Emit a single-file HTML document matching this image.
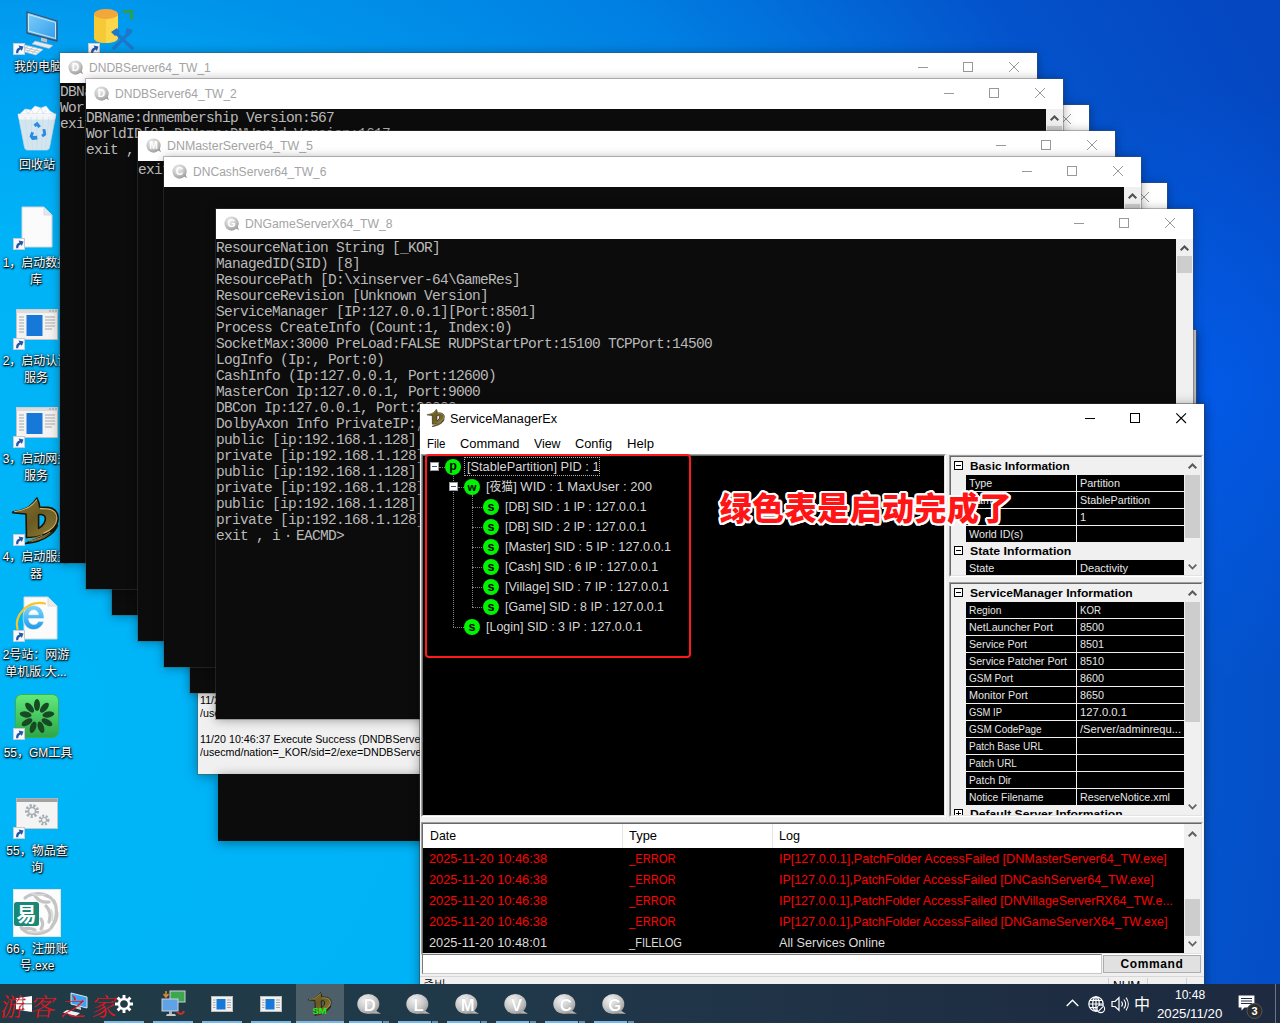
<!DOCTYPE html>
<html lang="zh-CN"><head><meta charset="utf-8"><title>desktop</title>
<style>
html,body{margin:0;padding:0}
body{width:1280px;height:1023px;overflow:hidden;position:relative;font-family:"Liberation Sans","Noto Sans CJK SC",sans-serif;
background:radial-gradient(ellipse 210px 300px at 1215px 385px,rgba(2,92,238,.75) 0,rgba(2,92,238,0) 100%),radial-gradient(circle at 0px 720px,#00b5f8 0,#00b3f7 480px,#00a4f4 640px,#0092ea 760px,#007fe2 950px,#0453cc 1220px,#0447c1 1420px);}
.a{position:absolute}
svg{display:block;overflow:visible}
/* desktop icons */
.lbl{position:absolute;width:90px;text-align:center;color:#fff;font-size:12px;line-height:17px;white-space:nowrap;
 text-shadow:0 1px 2px #000,0 0 3px rgba(0,0,0,.9),1px 1px 1px rgba(0,0,0,.8)}
/* console windows */
.cw{position:absolute;width:977px;height:510px;background:#0c0c0c;box-shadow:0 0 0 1px rgba(80,80,80,.35),0 1px 10px rgba(0,0,0,.36)}
.cw .tb{position:absolute;left:0;top:0;right:0;height:30px;background:#fff}
.cw .tt{position:absolute;left:29px;top:0;line-height:31px;font-size:12px;color:#a4a4a4;white-space:nowrap}
.cw .ic{position:absolute;left:8px;top:7px}
.cw .wb{position:absolute;top:9px;width:10px;height:10px}
.cw .con{position:absolute;left:0;top:30px;right:17px;bottom:0;color:#b9b9b9;font-family:"Liberation Mono",monospace;font-size:14.5px;letter-spacing:-0.7014px;line-height:16px;white-space:pre;overflow:hidden;padding-top:1px}
.cw .sb{position:absolute;right:0;top:30px;width:17px;bottom:0;background:#f0f0f0}
.cw .sb .th{position:absolute;left:1px;top:17px;width:15px;height:17px;background:#cdcdcd}
.fw{display:inline-block;width:16px;text-align:center;letter-spacing:0}
.f{display:inline-block;transform-origin:0 50%;white-space:nowrap}
/* service manager */
#sm{position:absolute;left:420px;top:404px;width:784px;height:600px;background:#f0f0f0;box-shadow:0 0 0 1px rgba(60,60,60,.45),0 1px 11px rgba(0,0,0,.38);font-size:12px;color:#000}
#sm .tb{position:absolute;left:0;top:0;right:0;height:30px;background:#fff}
#sm .mb{position:absolute;left:0;top:30px;right:0;height:20px;background:#fff}
#sm .mb span{position:absolute;top:0;line-height:20px;font-size:12.5px;white-space:nowrap}
.sunk{position:absolute;box-sizing:border-box;border:1px solid;border-color:#a0a0a0 #fff #fff #a0a0a0}
.sunk>.in{position:absolute;left:0;top:0;right:0;bottom:0;box-sizing:border-box;border:1px solid;border-color:#696969 #e3e3e3 #e3e3e3 #696969;overflow:hidden}
.tr{position:absolute;white-space:nowrap;color:#d6d6d6;font-size:13.3px;line-height:20px;height:20px}
.pg{position:absolute;left:0;top:0;right:17px;bottom:0;background:#f0f0f0;overflow:hidden;font-size:11px}
.pg .h{position:absolute;left:19px;font-weight:bold;font-size:11px;line-height:16px;height:16px;white-space:nowrap;color:#000}
.pg .bx{position:absolute;left:3px;width:7px;height:7px;border:1px solid #000;background:#fff}
.pg .bx:before{content:"";position:absolute;left:1px;top:3px;width:5px;height:1px;background:#000}
.pg .bx.p:after{content:"";position:absolute;left:3px;top:1px;width:1px;height:5px;background:#000}
.pg .n,.pg .v{position:absolute;height:16px;line-height:16px;background:#000;color:#e6e6e6;white-space:nowrap;overflow:hidden;font-size:11px;box-sizing:border-box;padding-left:3px}
.pg .n{left:15px;width:110px}
.pg .v{left:126px;right:0}
.vsb{position:absolute;right:0;top:0;bottom:0;width:17px;background:#f0f0f0}
.vsb .th{position:absolute;left:1px;width:15px;background:#cdcdcd}
.lv{position:absolute;white-space:nowrap;font-size:13px;line-height:21px;height:21px}
.red{color:#ff0000}
/* taskbar */
#tk{position:absolute;left:0;top:984px;width:1280px;height:39px;background:linear-gradient(90deg,#203b45 0,#20394a 40%,#203347 60%,#1e2d42 80%,#1d2a40 100%)}
.bar{position:absolute;top:37px;height:2px;width:40px;background:#76b9ed}
.bub{position:absolute;top:8px}
</style></head>
<body>
<svg class="a" style="left:12px;top:10px" width="48" height="46" viewBox="0 0 48 46">
<defs><linearGradient id="mon" x1="0" y1="0" x2="1" y2="1"><stop offset="0" stop-color="#7fd0fb"/><stop offset="1" stop-color="#2f9bea"/></linearGradient></defs>
<polygon points="15,2 45,11 45,31 15,23" fill="url(#mon)" stroke="#3c5068" stroke-width="1.3" stroke-linejoin="round"/>
<polygon points="16.5,4.5 43.5,12.5 43.5,28.5 16.5,21" fill="none" stroke="#d9ecf8" stroke-width=".9"/>
<polygon points="29,27.5 35,29 35,32.5 29,31" fill="#b9c1c9"/>
<polygon points="23,31 41,35.5 37,38.5 20,34" fill="#e6eaee" stroke="#aeb6be" stroke-width=".6"/>
<polygon points="9,34 31,39.5 24,45 2,39" fill="#f4f6f8" stroke="#c0c7ce" stroke-width=".7"/>
<path d="M7.5 36.300l21 5.100M5.5 38l20.5 5M11 35l-6 4.600M16 36.200l-6 4.600M21 37.400l-6 4.700M26 38.600l-6 4.8" stroke="#aab3bb" stroke-width=".7"/>
</svg>
<svg class="a" style="left:13px;top:43px" width="12" height="12" viewBox="0 0 12 12"><rect x=".5" y=".5" width="11" height="11" fill="#f7f8fa" stroke="#c2cbd6"/><path d="M3.2 10.300c-.5-3 .8-5.2 3.3-5.900L5.6 2.600l4.9.9-1.7 4.6-.9-1.700c-1.8.5-2.6 1.8-2.7 3.900z" fill="#2455a8"/></svg>
<div class="lbl" style="left:-7px;top:59px">我的电脑</div>
<svg class="a" style="left:92px;top:8px" width="44" height="44" viewBox="0 0 44 44">
<path d="M2 6v24c0 3 5.5 5 12 5s12-2 12-5V6z" fill="#fbd84a"/>
<path d="M2 6v24c0 3 5.5 5 12 5V6z" fill="#f4c22b" opacity=".6"/>
<ellipse cx="14" cy="6" rx="12" ry="5" fill="#f2a73b"/>
<path d="M31 2h10v10h-3V5h-7z" fill="#2e9f48"/>
<path d="M22 40L38 24" stroke="#1f77c9" stroke-width="3.4" stroke-linecap="round"/>
<path d="M40 40L24 25" stroke="#1f77c9" stroke-width="3.4" stroke-linecap="round"/>
<path d="M35 20l6 2-3 5-5-2z" fill="#1f77c9"/>
<path d="M19 24l6-4 3 4-5 4z" fill="#1f77c9"/>
</svg>
<svg class="a" style="left:88px;top:43px" width="12" height="12" viewBox="0 0 12 12"><rect x=".5" y=".5" width="11" height="11" fill="#f7f8fa" stroke="#c2cbd6"/><path d="M3.2 10.300c-.5-3 .8-5.2 3.3-5.900L5.6 2.600l4.9.9-1.7 4.6-.9-1.700c-1.8.5-2.6 1.8-2.7 3.900z" fill="#2455a8"/></svg>
<svg class="a" style="left:16px;top:105px" width="42" height="46" viewBox="0 0 42 46">
<path d="M4 9l5-5 6 1 4-4 6 2 5-2 4 5 5 3-2 4H6z" fill="#fbfcfd" stroke="#d8dde2" stroke-width=".6"/>
<path d="M9 4l3 5 3-4 4 5 6-7 2 6 3-4" fill="none" stroke="#d5dbe0" stroke-width=".8"/>
<path d="M2 9h38l-6.5 33.500c-.3 1.5-1.4 2.5-3 2.500H11.500c-1.6 0-2.7-1-3-2.500z" fill="#e4ebf1" fill-opacity=".92" stroke="#cfd8e0" stroke-width=".7"/>
<path d="M2 9h38l-1 5.500H3z" fill="#f3f6f9"/>
<path d="M9 12l3.5 31M33 12l-3.5 31M21 12v32M15 12l1.5 32M27 12l-1.5 32" stroke="#ccd6de" stroke-width=".6" fill="none"/>
<g fill="#2b8be0"><path d="M17.5 19.500l3.8-2.8 3.6 4.6-2.6 1.6-1.5-2-1.4 1z"/><path d="M26.5 24l3 .3.7 5.6-3.2 2.4-1.8-2.4 2-1.500z"/><path d="M21.5 34.500l-5.5.4-2.5-3.3 1.8-4.9 2.7 1.1-1.2 3.2 4.3-.3z"/></g>
</svg>
<div class="lbl" style="left:-8px;top:157px">回收站</div>
<svg class="a" style="left:21px;top:206px" width="32" height="42" viewBox="0 0 32 42">
<path d="M1 1h22l8 8v32H1z" fill="#fbfbfb" stroke="#d2d6da" stroke-width="1"/>
<path d="M23 1v8h8z" fill="#e4e7ea" stroke="#d2d6da" stroke-width=".8"/></svg>
<svg class="a" style="left:13px;top:238px" width="12" height="12" viewBox="0 0 12 12"><rect x=".5" y=".5" width="11" height="11" fill="#f7f8fa" stroke="#c2cbd6"/><path d="M3.2 10.300c-.5-3 .8-5.2 3.3-5.900L5.6 2.600l4.9.9-1.7 4.6-.9-1.700c-1.8.5-2.6 1.8-2.7 3.900z" fill="#2455a8"/></svg>
<div class="lbl" style="left:-9px;top:255px">1，启动数据<br>库</div>
<svg class="a" style="left:16px;top:309px" width="42" height="31" viewBox="0 0 42 31">
<rect x=".5" y=".5" width="41" height="30" fill="#f3f3f3" stroke="#c3c3c3"/>
<rect x=".5" y=".5" width="41" height="3.5" fill="#dcdcdc"/>
<rect x="10.5" y="6" width="16" height="21" fill="#1678d8"/>
<g stroke="#a9a9a9" stroke-width="1"><path d="M3 8h5M3 11h5M3 14h5M3 17h5M3 20h5M3 23h5"/><path d="M29 8h10M29 11h10M29 14h10M29 17h10M29 20h7"/></g>
<g fill="#9a9a9a"><rect x="33" y="1.5" width="2" height="1"/><rect x="36" y="1.5" width="2" height="1"/><rect x="39" y="1.5" width="2" height="1"/></g>
</svg>
<svg class="a" style="left:13px;top:338px" width="12" height="12" viewBox="0 0 12 12"><rect x=".5" y=".5" width="11" height="11" fill="#f7f8fa" stroke="#c2cbd6"/><path d="M3.2 10.300c-.5-3 .8-5.2 3.3-5.900L5.6 2.600l4.9.9-1.7 4.6-.9-1.700c-1.8.5-2.6 1.8-2.7 3.900z" fill="#2455a8"/></svg>
<div class="lbl" style="left:-9px;top:353px">2，启动认证<br>服务</div>
<svg class="a" style="left:16px;top:407px" width="42" height="31" viewBox="0 0 42 31">
<rect x=".5" y=".5" width="41" height="30" fill="#f3f3f3" stroke="#c3c3c3"/>
<rect x=".5" y=".5" width="41" height="3.5" fill="#dcdcdc"/>
<rect x="10.5" y="6" width="16" height="21" fill="#1678d8"/>
<g stroke="#a9a9a9" stroke-width="1"><path d="M3 8h5M3 11h5M3 14h5M3 17h5M3 20h5M3 23h5"/><path d="M29 8h10M29 11h10M29 14h10M29 17h10M29 20h7"/></g>
<g fill="#9a9a9a"><rect x="33" y="1.5" width="2" height="1"/><rect x="36" y="1.5" width="2" height="1"/><rect x="39" y="1.5" width="2" height="1"/></g>
</svg>
<svg class="a" style="left:13px;top:436px" width="12" height="12" viewBox="0 0 12 12"><rect x=".5" y=".5" width="11" height="11" fill="#f7f8fa" stroke="#c2cbd6"/><path d="M3.2 10.300c-.5-3 .8-5.2 3.3-5.900L5.6 2.600l4.9.9-1.7 4.6-.9-1.700c-1.8.5-2.6 1.8-2.7 3.900z" fill="#2455a8"/></svg>
<div class="lbl" style="left:-9px;top:451px">3，启动网关<br>服务</div>
<svg class="a" style="left:12px;top:497px" width="48" height="48" viewBox="0 0 48 48">
<defs><linearGradient id="gd12_497" x1="0" y1="0" x2="1" y2="1"><stop offset="0" stop-color="#8a7630"/><stop offset=".5" stop-color="#6a5a22"/><stop offset="1" stop-color="#94803a"/></linearGradient></defs>
<path d="M13.4 46.600C22 46 31.5 43 38 38c4-3 6.5-6.5 7.5-10-3 5-9 9.5-16 12.2-6 2.1-12 3.6-16.1 6.400z" fill="#7c6a2a" stroke="#1a1405" stroke-width="1.4" stroke-linejoin="round"/>
<path fill-rule="evenodd" d="M25 1c1.5 3 2.6 6 2.6 9l8.4.4c6.5.6 10.5 5.1 10.2 11.2-.4 7.4-7.2 13.9-16.2 16.9-6 2-11 2.5-15.5 2l-.5-23.500L.7 15.800V15c6.3-1 12.3-2.5 16.1-5.100C20 7.5 23 4.5 25 1zM26.6 17.700c3.4-.7 6.8.3 6.8 3.8 0 4-2.9 7.5-6.8 9.900z" fill="url(#gd12_497)" stroke="#1a1405" stroke-width="1.6" stroke-linejoin="round"/>
<path d="M2.5 14.800c6-1 11.5-2.6 15-5 3-2.2 5.5-4.5 7.2-7M28.5 11.600l7.5.4c5.5.5 9 4.3 8.8 9.5-.3 6-5.5 11.5-13 14.5" fill="none" stroke="#d8c47a" stroke-width="1.1" stroke-linecap="round" opacity=".9"/>
<path d="M15.5 41.800c5-.2 10.5-1.6 15-3.600M17 44.200c7-1.3 15-4.2 21-9" fill="none" stroke="#c9b566" stroke-width=".9" opacity=".8"/>
</svg>
<svg class="a" style="left:13px;top:534px" width="12" height="12" viewBox="0 0 12 12"><rect x=".5" y=".5" width="11" height="11" fill="#f7f8fa" stroke="#c2cbd6"/><path d="M3.2 10.300c-.5-3 .8-5.2 3.3-5.900L5.6 2.600l4.9.9-1.7 4.6-.9-1.700c-1.8.5-2.6 1.8-2.7 3.900z" fill="#2455a8"/></svg>
<div class="lbl" style="left:-9px;top:549px">4，启动服务<br>器</div>
<svg class="a" style="left:15px;top:596px" width="44" height="45" viewBox="0 0 44 45">
<defs><linearGradient id="ieg" x1="0" y1="0" x2="0" y2="1"><stop offset="0" stop-color="#7fd4fb"/><stop offset="1" stop-color="#1f9be6"/></linearGradient></defs>
<path d="M9 1h24l9 9v33H9z" fill="#fbfbfb" stroke="#d4d7da"/>
<path d="M33 1v9h9z" fill="#e8eaec" stroke="#d4d7da" stroke-width=".8"/>
<path d="M28.8 25.500c-1.3 4.7-5.3 8-10.3 8C12.7 33.5 8 28.8 8 21.500S12.7 9.5 18.5 9.500c6.2 0 10.8 5.3 10.5 13H13.500c.3 3.7 2.3 6 5.3 6 2.2 0 3.8-1.1 4.6-3zM13.7 18.700h9.800c-.4-3-2.2-4.8-4.8-4.8-2.7 0-4.5 1.8-5 4.800z" fill="url(#ieg)" stroke="#e9f6fd" stroke-width=".5"/>
<path d="M2.5 33C-1 20 12 4 30 7.5" fill="none" stroke="#f6c62c" stroke-width="2.2" stroke-linecap="round"/>
</svg>
<svg class="a" style="left:13px;top:630px" width="12" height="12" viewBox="0 0 12 12"><rect x=".5" y=".5" width="11" height="11" fill="#f7f8fa" stroke="#c2cbd6"/><path d="M3.2 10.300c-.5-3 .8-5.2 3.3-5.900L5.6 2.600l4.9.9-1.7 4.6-.9-1.700c-1.8.5-2.6 1.8-2.7 3.900z" fill="#2455a8"/></svg>
<div class="lbl" style="left:-9px;top:647px">2号站：网游<br>单机版.大...</div>
<svg class="a" style="left:15px;top:694px" width="44" height="44" viewBox="0 0 44 44">
<defs><linearGradient id="grn" x1="0" y1="0" x2="0" y2="1"><stop offset="0" stop-color="#62ea7c"/><stop offset="1" stop-color="#2ea548"/></linearGradient></defs>
<rect x=".5" y=".5" width="43" height="43" rx="6" fill="url(#grn)" stroke="#35b150"/>
<g fill="#174a22" transform="translate(22 22.5)"><ellipse rx="3" ry="6" cy="-11.5" transform="rotate(0)"/><ellipse rx="3" ry="6" cy="-11.5" transform="rotate(40)"/><ellipse rx="3" ry="6" cy="-11.5" transform="rotate(80)"/><ellipse rx="3" ry="6" cy="-11.5" transform="rotate(120)"/><ellipse rx="3" ry="6" cy="-11.5" transform="rotate(160)"/><ellipse rx="3" ry="6" cy="-11.5" transform="rotate(200)"/><ellipse rx="3" ry="6" cy="-11.5" transform="rotate(240)"/><ellipse rx="3" ry="6" cy="-11.5" transform="rotate(280)"/><ellipse rx="3" ry="6" cy="-11.5" transform="rotate(320)"/></g></svg>
<svg class="a" style="left:13px;top:728px" width="12" height="12" viewBox="0 0 12 12"><rect x=".5" y=".5" width="11" height="11" fill="#f7f8fa" stroke="#c2cbd6"/><path d="M3.2 10.300c-.5-3 .8-5.2 3.3-5.900L5.6 2.600l4.9.9-1.7 4.6-.9-1.700c-1.8.5-2.6 1.8-2.7 3.900z" fill="#2455a8"/></svg>
<div class="lbl" style="left:-7px;top:745px">55，GM工具</div>
<svg class="a" style="left:16px;top:798px" width="42" height="31" viewBox="0 0 42 31">
<rect x=".5" y=".5" width="41" height="30" fill="#f4f4f4" stroke="#c6c6c6"/>
<rect x=".5" y=".5" width="41" height="3.5" fill="#a2a2a2"/>
<g fill="none" stroke="#a8aeb4"><circle cx="16" cy="13" r="5.5" stroke-width="3" stroke-dasharray="2.2 1.6"/><circle cx="16" cy="13" r="3.5" stroke-width="1.5"/><circle cx="28" cy="22" r="4.2" stroke-width="2.6" stroke-dasharray="2 1.5"/><circle cx="28" cy="22" r="2.5" stroke-width="1.2"/></g>
</svg>
<svg class="a" style="left:13px;top:827px" width="12" height="12" viewBox="0 0 12 12"><rect x=".5" y=".5" width="11" height="11" fill="#f7f8fa" stroke="#c2cbd6"/><path d="M3.2 10.300c-.5-3 .8-5.2 3.3-5.900L5.6 2.600l4.9.9-1.7 4.6-.9-1.700c-1.8.5-2.6 1.8-2.7 3.900z" fill="#2455a8"/></svg>
<div class="lbl" style="left:-8px;top:843px">55，物品查<br>询</div>
<svg class="a" style="left:13px;top:889px" width="48" height="48" viewBox="0 0 48 48">
<rect x=".5" y=".5" width="47" height="47" fill="#fdfdfd" stroke="#e3e3e3"/>
<g fill="none" stroke="#c4c4c4" stroke-width="3.2" stroke-linecap="round"><path d="M12 9c6-5 16-6 24-1M30 5c5 1 10 5 12 10M41 12c4 8 3 19-3 27M44 24c0 5-2 10-5 13M36 41c-8 5-19 5-27-1M16 44c-3-1-6-3-8-6M22 7c3 4 8 7 14 6M33 17c4 4 5 10 3 16M28 30c2 3 2 7 0 10M10 40c4-1 8-1 12 1"/></g>
<g fill="none" stroke="#dadada" stroke-width="1.6"><path d="M18 4c5 3 9 3 14 1M38 20c2 4 2 8 1 12M14 42c6 2 12 2 18-1"/></g>
<rect x="1" y="13" width="25" height="24" rx="2.5" fill="#1a8878"/>
<text x="13.5" y="32.5" font-size="20" font-weight="bold" fill="#fff" text-anchor="middle" font-family="'Liberation Sans','Noto Sans CJK SC',sans-serif">易</text>
</svg>
<div class="lbl" style="left:-8px;top:941px">66，注册账<br>号.exe</div>
<div class="a" style="left:198px;top:330px;width:998px;height:444px;background:#f0f0f0;border-right:3px solid #cfcfcf;box-sizing:border-box;box-shadow:0 0 0 1px rgba(90,90,90,.5),0 2px 12px rgba(0,0,0,.4);font-size:11px;line-height:13px;color:#000;white-space:pre">
<div class="a" style="left:2px;top:364px;font-size:11.5px;transform:scaleX(0.93);transform-origin:0 0">11/20 10:46:37 Execute Success (DNDBServer64_TW.exe)
/usecmd/nation=_KOR/sid=1/exe=DNDBServer64_TW.exe

11/20 10:46:37 Execute Success (DNDBServer64_TW.exe)
/usecmd/nation=_KOR/sid=2/exe=DNDBServer64_TW.exe</div></div>
<div class="a" style="left:218px;top:774px;width:700px;height:67px;background:#0c0c0c;box-shadow:0 2px 10px rgba(0,0,0,.4)"></div>
<div class="cw" style="left:112px;top:105px"><div class="tb"><svg class="ic" width="16" height="16" viewBox="0 0 18 18"><defs><radialGradient id="bgc2" cx=".4" cy=".3" r=".8"><stop offset="0" stop-color="#f0f0f0"/><stop offset=".55" stop-color="#c4c4c4"/><stop offset="1" stop-color="#909090"/></radialGradient></defs><path d="M12 13l5 3-2-5z" fill="#9a9a9a"/><circle cx="8.5" cy="8.5" r="8" fill="url(#bgc2)"/><text x="8.5" y="12.6" font-size="11.5" font-weight="bold" fill="#fff" text-anchor="middle" font-family="'Liberation Sans',sans-serif">L</text></svg><div class="tt"></div><svg class="wb" style="left:858px" viewBox="0 0 10 10"><path d="M0 5.500h10" stroke="#999" stroke-width="1"/></svg><svg class="wb" style="left:903px" viewBox="0 0 10 10"><rect x=".5" y=".5" width="9" height="9" fill="none" stroke="#999" stroke-width="1"/></svg><svg class="wb" style="left:949px" viewBox="0 0 10 10"><path d="M0 0l10 10M10 0L0 10" stroke="#999" stroke-width="1"/></svg></div><div class="con"></div><div class="sb"><svg class="a" style="left:4px;top:6px" width="9" height="6" viewBox="0 0 9 6"><path d="M.7 5.300L4.5 1.500l3.8 3.8" fill="none" stroke="#505050" stroke-width="2"/></svg><div class="th"></div></div></div>
<div class="cw" style="left:60px;top:53px"><div class="tb"><svg class="ic" width="16" height="16" viewBox="0 0 18 18"><defs><radialGradient id="bgc0" cx=".4" cy=".3" r=".8"><stop offset="0" stop-color="#f0f0f0"/><stop offset=".55" stop-color="#c4c4c4"/><stop offset="1" stop-color="#909090"/></radialGradient></defs><path d="M12 13l5 3-2-5z" fill="#9a9a9a"/><circle cx="8.5" cy="8.5" r="8" fill="url(#bgc0)"/><text x="8.5" y="12.6" font-size="11.5" font-weight="bold" fill="#fff" text-anchor="middle" font-family="'Liberation Sans',sans-serif">D</text></svg><div class="tt"><span class="f" id="f1" style="transform:scaleX(1.0035)">DNDBServer64_TW_1</span></div><svg class="wb" style="left:858px" viewBox="0 0 10 10"><path d="M0 5.500h10" stroke="#999" stroke-width="1"/></svg><svg class="wb" style="left:903px" viewBox="0 0 10 10"><rect x=".5" y=".5" width="9" height="9" fill="none" stroke="#999" stroke-width="1"/></svg><svg class="wb" style="left:949px" viewBox="0 0 10 10"><path d="M0 0l10 10M10 0L0 10" stroke="#999" stroke-width="1"/></svg></div><div class="con">DBName:dnmembership Version:567
WorldID[0] DBName:DNWorld Version:1617
exit , i<span class="fw">·</span>EACMD&gt;</div><div class="sb"><svg class="a" style="left:4px;top:6px" width="9" height="6" viewBox="0 0 9 6"><path d="M.7 5.300L4.5 1.500l3.8 3.8" fill="none" stroke="#505050" stroke-width="2"/></svg><div class="th"></div></div></div>
<div class="cw" style="left:86px;top:79px"><div class="tb"><svg class="ic" width="16" height="16" viewBox="0 0 18 18"><defs><radialGradient id="bgc1" cx=".4" cy=".3" r=".8"><stop offset="0" stop-color="#f0f0f0"/><stop offset=".55" stop-color="#c4c4c4"/><stop offset="1" stop-color="#909090"/></radialGradient></defs><path d="M12 13l5 3-2-5z" fill="#9a9a9a"/><circle cx="8.5" cy="8.5" r="8" fill="url(#bgc1)"/><text x="8.5" y="12.6" font-size="11.5" font-weight="bold" fill="#fff" text-anchor="middle" font-family="'Liberation Sans',sans-serif">D</text></svg><div class="tt"><span class="f" id="f2" style="transform:scaleX(1.0035)">DNDBServer64_TW_2</span></div><svg class="wb" style="left:858px" viewBox="0 0 10 10"><path d="M0 5.500h10" stroke="#999" stroke-width="1"/></svg><svg class="wb" style="left:903px" viewBox="0 0 10 10"><rect x=".5" y=".5" width="9" height="9" fill="none" stroke="#999" stroke-width="1"/></svg><svg class="wb" style="left:949px" viewBox="0 0 10 10"><path d="M0 0l10 10M10 0L0 10" stroke="#999" stroke-width="1"/></svg></div><div class="con">DBName:dnmembership Version:567
WorldID[0] DBName:DNWorld Version:1617
exit , i<span class="fw">·</span>EACMD&gt;</div><div class="sb"><svg class="a" style="left:4px;top:6px" width="9" height="6" viewBox="0 0 9 6"><path d="M.7 5.300L4.5 1.500l3.8 3.8" fill="none" stroke="#505050" stroke-width="2"/></svg><div class="th"></div></div></div>
<div class="cw" style="left:190px;top:183px"><div class="tb"><svg class="ic" width="16" height="16" viewBox="0 0 18 18"><defs><radialGradient id="bgc5" cx=".4" cy=".3" r=".8"><stop offset="0" stop-color="#f0f0f0"/><stop offset=".55" stop-color="#c4c4c4"/><stop offset="1" stop-color="#909090"/></radialGradient></defs><path d="M12 13l5 3-2-5z" fill="#9a9a9a"/><circle cx="8.5" cy="8.5" r="8" fill="url(#bgc5)"/><text x="8.5" y="12.6" font-size="11.5" font-weight="bold" fill="#fff" text-anchor="middle" font-family="'Liberation Sans',sans-serif">V</text></svg><div class="tt"></div><svg class="wb" style="left:858px" viewBox="0 0 10 10"><path d="M0 5.500h10" stroke="#999" stroke-width="1"/></svg><svg class="wb" style="left:903px" viewBox="0 0 10 10"><rect x=".5" y=".5" width="9" height="9" fill="none" stroke="#999" stroke-width="1"/></svg><svg class="wb" style="left:949px" viewBox="0 0 10 10"><path d="M0 0l10 10M10 0L0 10" stroke="#999" stroke-width="1"/></svg></div><div class="con"></div><div class="sb"><svg class="a" style="left:4px;top:6px" width="9" height="6" viewBox="0 0 9 6"><path d="M.7 5.300L4.5 1.500l3.8 3.8" fill="none" stroke="#505050" stroke-width="2"/></svg><div class="th"></div></div></div>
<div class="cw" style="left:138px;top:131px"><div class="tb"><svg class="ic" width="16" height="16" viewBox="0 0 18 18"><defs><radialGradient id="bgc3" cx=".4" cy=".3" r=".8"><stop offset="0" stop-color="#f0f0f0"/><stop offset=".55" stop-color="#c4c4c4"/><stop offset="1" stop-color="#909090"/></radialGradient></defs><path d="M12 13l5 3-2-5z" fill="#9a9a9a"/><circle cx="8.5" cy="8.5" r="8" fill="url(#bgc3)"/><text x="8.5" y="12.6" font-size="11.5" font-weight="bold" fill="#fff" text-anchor="middle" font-family="'Liberation Sans',sans-serif">M</text></svg><div class="tt"><span class="f" id="f3" style="transform:scaleX(1.0327)">DNMasterServer64_TW_5</span></div><svg class="wb" style="left:858px" viewBox="0 0 10 10"><path d="M0 5.500h10" stroke="#999" stroke-width="1"/></svg><svg class="wb" style="left:903px" viewBox="0 0 10 10"><rect x=".5" y=".5" width="9" height="9" fill="none" stroke="#999" stroke-width="1"/></svg><svg class="wb" style="left:949px" viewBox="0 0 10 10"><path d="M0 0l10 10M10 0L0 10" stroke="#999" stroke-width="1"/></svg></div><div class="con">exit , i<span class="fw">·</span>EACMD&gt;</div><div class="sb"><svg class="a" style="left:4px;top:6px" width="9" height="6" viewBox="0 0 9 6"><path d="M.7 5.300L4.5 1.500l3.8 3.8" fill="none" stroke="#505050" stroke-width="2"/></svg><div class="th"></div></div></div>
<div class="cw" style="left:164px;top:157px"><div class="tb"><svg class="ic" width="16" height="16" viewBox="0 0 18 18"><defs><radialGradient id="bgc4" cx=".4" cy=".3" r=".8"><stop offset="0" stop-color="#f0f0f0"/><stop offset=".55" stop-color="#c4c4c4"/><stop offset="1" stop-color="#909090"/></radialGradient></defs><path d="M12 13l5 3-2-5z" fill="#9a9a9a"/><circle cx="8.5" cy="8.5" r="8" fill="url(#bgc4)"/><text x="8.5" y="12.6" font-size="11.5" font-weight="bold" fill="#fff" text-anchor="middle" font-family="'Liberation Sans',sans-serif">C</text></svg><div class="tt"><span class="f" id="f4" style="transform:scaleX(1.0059)">DNCashServer64_TW_6</span></div><svg class="wb" style="left:858px" viewBox="0 0 10 10"><path d="M0 5.500h10" stroke="#999" stroke-width="1"/></svg><svg class="wb" style="left:903px" viewBox="0 0 10 10"><rect x=".5" y=".5" width="9" height="9" fill="none" stroke="#999" stroke-width="1"/></svg><svg class="wb" style="left:949px" viewBox="0 0 10 10"><path d="M0 0l10 10M10 0L0 10" stroke="#999" stroke-width="1"/></svg></div><div class="con"></div><div class="sb"><svg class="a" style="left:4px;top:6px" width="9" height="6" viewBox="0 0 9 6"><path d="M.7 5.300L4.5 1.500l3.8 3.8" fill="none" stroke="#505050" stroke-width="2"/></svg><div class="th"></div></div></div>
<div class="cw" style="left:216px;top:209px"><div class="tb"><svg class="ic" width="16" height="16" viewBox="0 0 18 18"><defs><radialGradient id="bgc6" cx=".4" cy=".3" r=".8"><stop offset="0" stop-color="#f0f0f0"/><stop offset=".55" stop-color="#c4c4c4"/><stop offset="1" stop-color="#909090"/></radialGradient></defs><path d="M12 13l5 3-2-5z" fill="#9a9a9a"/><circle cx="8.5" cy="8.5" r="8" fill="url(#bgc6)"/><text x="8.5" y="12.6" font-size="11.5" font-weight="bold" fill="#fff" text-anchor="middle" font-family="'Liberation Sans',sans-serif">G</text></svg><div class="tt"><span class="f" id="f5" style="transform:scaleX(1.0145)">DNGameServerX64_TW_8</span></div><svg class="wb" style="left:858px" viewBox="0 0 10 10"><path d="M0 5.500h10" stroke="#999" stroke-width="1"/></svg><svg class="wb" style="left:903px" viewBox="0 0 10 10"><rect x=".5" y=".5" width="9" height="9" fill="none" stroke="#999" stroke-width="1"/></svg><svg class="wb" style="left:949px" viewBox="0 0 10 10"><path d="M0 0l10 10M10 0L0 10" stroke="#999" stroke-width="1"/></svg></div><div class="con">ResourceNation String [_KOR]
ManagedID(SID) [8]
ResourcePath [D:\xinserver-64\GameRes]
ResourceRevision [Unknown Version]
ServiceManager [IP:127.0.0.1][Port:8501]
Process CreateInfo (Count:1, Index:0)
SocketMax:3000 PreLoad:FALSE RUDPStartPort:15100 TCPPort:14500
LogInfo (Ip:, Port:0)
CashInfo (Ip:127.0.0.1, Port:12600)
MasterCon Ip:127.0.0.1, Port:9000
DBCon Ip:127.0.0.1, Port:26000
DolbyAxon Info PrivateIP:,
public [ip:192.168.1.128]
private [ip:192.168.1.128]
public [ip:192.168.1.128]
private [ip:192.168.1.128]
public [ip:192.168.1.128]
private [ip:192.168.1.128]
exit , i<span class="fw">·</span>EACMD&gt;</div><div class="sb"><svg class="a" style="left:4px;top:6px" width="9" height="6" viewBox="0 0 9 6"><path d="M.7 5.300L4.5 1.500l3.8 3.8" fill="none" stroke="#505050" stroke-width="2"/></svg><div class="th"></div></div></div>
<div id="sm"><div class="tb"><svg class="a" style="left:7px;top:5px" width="18" height="18" viewBox="0 0 48 48">
<defs><linearGradient id="gd7_5" x1="0" y1="0" x2="1" y2="1"><stop offset="0" stop-color="#8a7630"/><stop offset=".5" stop-color="#6a5a22"/><stop offset="1" stop-color="#94803a"/></linearGradient></defs>
<path d="M13.4 46.600C22 46 31.5 43 38 38c4-3 6.5-6.5 7.5-10-3 5-9 9.5-16 12.2-6 2.1-12 3.6-16.1 6.400z" fill="#7c6a2a" stroke="#1a1405" stroke-width="1.4" stroke-linejoin="round"/>
<path fill-rule="evenodd" d="M25 1c1.5 3 2.6 6 2.6 9l8.4.4c6.5.6 10.5 5.1 10.2 11.2-.4 7.4-7.2 13.9-16.2 16.9-6 2-11 2.5-15.5 2l-.5-23.500L.7 15.800V15c6.3-1 12.3-2.5 16.1-5.100C20 7.5 23 4.5 25 1zM26.6 17.700c3.4-.7 6.8.3 6.8 3.8 0 4-2.9 7.5-6.8 9.900z" fill="url(#gd7_5)" stroke="#1a1405" stroke-width="1.6" stroke-linejoin="round"/>
<path d="M2.5 14.800c6-1 11.5-2.6 15-5 3-2.2 5.5-4.5 7.2-7M28.5 11.600l7.5.4c5.5.5 9 4.3 8.8 9.5-.3 6-5.5 11.5-13 14.5" fill="none" stroke="#d8c47a" stroke-width="1.1" stroke-linecap="round" opacity=".9"/>
<path d="M15.5 41.800c5-.2 10.5-1.6 15-3.600M17 44.200c7-1.3 15-4.2 21-9" fill="none" stroke="#c9b566" stroke-width=".9" opacity=".8"/>
</svg><div class="a" style="left:30px;top:0;line-height:30px;font-size:12.5px;white-space:nowrap"><span class="f" id="f6" style="transform:scaleX(1.0132)">ServiceManagerEx</span></div><svg class="a" style="left:665px;top:9px" width="12" height="12" viewBox="0 0 12 12"><path d="M0 5.500h10" stroke="#000" stroke-width="1" shape-rendering="crispEdges"/></svg><svg class="a" style="left:710px;top:9px" width="12" height="12" viewBox="0 0 12 12"><rect x=".5" y=".5" width="9" height="9" fill="none" stroke="#000" stroke-width="1" shape-rendering="crispEdges"/></svg><svg class="a" style="left:756px;top:9px" width="12" height="12" viewBox="0 0 12 12"><path d="M.3.3l9.7 9.700M10 .3L.3 10" stroke="#000" stroke-width="1.1"/></svg></div><div class="mb"><span style="left:7px"><span class="f" id="f7" style="transform:scaleX(0.9178)">File</span></span><span style="left:40px"><span class="f" id="f8" style="transform:scaleX(1.0317)">Command</span></span><span style="left:114px"><span class="f" id="f9" style="transform:scaleX(0.9860)">View</span></span><span style="left:155px"><span class="f" id="f10" style="transform:scaleX(1.0238)">Config</span></span><span style="left:207px"><span class="f" id="f11" style="transform:scaleX(1.0498)">Help</span></span></div><div class="sunk" style="left:1px;top:50px;width:525px;height:363px"><div class="in" style="background:#000"><div class="a" style="left:16px;top:11px;width:6px;border-top:1px dotted #808080"></div><div class="a" style="left:30px;top:20px;height:151px;border-left:1px dotted #808080"></div><div class="a" style="left:30px;top:171px;width:11px;border-top:1px dotted #808080"></div><div class="a" style="left:35px;top:31px;width:6px;border-top:1px dotted #808080"></div><div class="a" style="left:49px;top:39px;height:112px;border-left:1px dotted #808080"></div><div class="a" style="left:49px;top:51px;width:10px;border-top:1px dotted #808080"></div><div class="a" style="left:49px;top:71px;width:10px;border-top:1px dotted #808080"></div><div class="a" style="left:49px;top:91px;width:10px;border-top:1px dotted #808080"></div><div class="a" style="left:49px;top:111px;width:10px;border-top:1px dotted #808080"></div><div class="a" style="left:49px;top:131px;width:10px;border-top:1px dotted #808080"></div><div class="a" style="left:49px;top:151px;width:10px;border-top:1px dotted #808080"></div><svg class="a" style="left:7px;top:6px" width="9" height="9" viewBox="0 0 9 9"><rect x=".5" y=".5" width="8" height="8" fill="#fff" stroke="#9a9a9a"/><path d="M2 4.500h5" stroke="#3a4fa0" stroke-width="1"/></svg><svg class="a" style="left:22px;top:3px" width="16" height="16" viewBox="0 0 16 16"><circle cx="8" cy="8" r="8" fill="#00f400"/><text x="8" y="11.2" font-size="12.5" font-weight="bold" text-anchor="middle" fill="#000" font-family="'Liberation Sans',sans-serif">p</text></svg><div class="a" style="left:41px;top:1px;width:136px;height:19px;border:1px dotted #b0b0b0;box-sizing:border-box"></div><div class="tr" style="left:44px;top:1px"><span class="f" id="f12" style="transform:scaleX(0.9586)">[StablePartition] PID : 1</span></div><svg class="a" style="left:26px;top:26px" width="9" height="9" viewBox="0 0 9 9"><rect x=".5" y=".5" width="8" height="8" fill="#fff" stroke="#9a9a9a"/><path d="M2 4.500h5" stroke="#3a4fa0" stroke-width="1"/></svg><svg class="a" style="left:41px;top:23px" width="16" height="16" viewBox="0 0 16 16"><circle cx="8" cy="8" r="8" fill="#00f400"/><text x="8" y="12" font-size="11.5" font-weight="bold" text-anchor="middle" fill="#000" font-family="'Liberation Sans',sans-serif">w</text></svg><div class="tr" style="left:63px;top:21px"><span class="f" id="f13" style="transform:scaleX(0.9788)">[<span style="font-size:12px">夜猫</span>] WID : 1 MaxUser : 200</span></div><svg class="a" style="left:60px;top:43px" width="16" height="16" viewBox="0 0 16 16"><circle cx="8" cy="8" r="8" fill="#00f400"/><text x="8" y="12" font-size="12.5" font-weight="bold" text-anchor="middle" fill="#000" font-family="'Liberation Sans',sans-serif">s</text></svg><div class="tr" style="left:82px;top:41px"><span class="f" id="f14" style="transform:scaleX(0.9263)">[DB] SID : 1 IP : 127.0.0.1</span></div><svg class="a" style="left:60px;top:63px" width="16" height="16" viewBox="0 0 16 16"><circle cx="8" cy="8" r="8" fill="#00f400"/><text x="8" y="12" font-size="12.5" font-weight="bold" text-anchor="middle" fill="#000" font-family="'Liberation Sans',sans-serif">s</text></svg><div class="tr" style="left:82px;top:61px"><span class="f" id="f15" style="transform:scaleX(0.9263)">[DB] SID : 2 IP : 127.0.0.1</span></div><svg class="a" style="left:60px;top:83px" width="16" height="16" viewBox="0 0 16 16"><circle cx="8" cy="8" r="8" fill="#00f400"/><text x="8" y="12" font-size="12.5" font-weight="bold" text-anchor="middle" fill="#000" font-family="'Liberation Sans',sans-serif">s</text></svg><div class="tr" style="left:82px;top:81px"><span class="f" id="f16" style="transform:scaleX(0.9490)">[Master] SID : 5 IP : 127.0.0.1</span></div><svg class="a" style="left:60px;top:103px" width="16" height="16" viewBox="0 0 16 16"><circle cx="8" cy="8" r="8" fill="#00f400"/><text x="8" y="12" font-size="12.5" font-weight="bold" text-anchor="middle" fill="#000" font-family="'Liberation Sans',sans-serif">s</text></svg><div class="tr" style="left:82px;top:101px"><span class="f" id="f17" style="transform:scaleX(0.9254)">[Cash] SID : 6 IP : 127.0.0.1</span></div><svg class="a" style="left:60px;top:123px" width="16" height="16" viewBox="0 0 16 16"><circle cx="8" cy="8" r="8" fill="#00f400"/><text x="8" y="12" font-size="12.5" font-weight="bold" text-anchor="middle" fill="#000" font-family="'Liberation Sans',sans-serif">s</text></svg><div class="tr" style="left:82px;top:121px"><span class="f" id="f18" style="transform:scaleX(0.9427)">[Village] SID : 7 IP : 127.0.0.1</span></div><svg class="a" style="left:60px;top:143px" width="16" height="16" viewBox="0 0 16 16"><circle cx="8" cy="8" r="8" fill="#00f400"/><text x="8" y="12" font-size="12.5" font-weight="bold" text-anchor="middle" fill="#000" font-family="'Liberation Sans',sans-serif">s</text></svg><div class="tr" style="left:82px;top:141px"><span class="f" id="f19" style="transform:scaleX(0.9326)">[Game] SID : 8 IP : 127.0.0.1</span></div><svg class="a" style="left:41px;top:163px" width="16" height="16" viewBox="0 0 16 16"><circle cx="8" cy="8" r="8" fill="#00f400"/><text x="8" y="12" font-size="12.5" font-weight="bold" text-anchor="middle" fill="#000" font-family="'Liberation Sans',sans-serif">s</text></svg><div class="tr" style="left:63px;top:161px"><span class="f" id="f20" style="transform:scaleX(0.9381)">[Login] SID : 3 IP : 127.0.0.1</span></div></div></div><div class="sunk" style="left:529px;top:51px;width:254px;height:122px"><div class="in"><div class="pg"><div class="bx" style="top:4px"></div><div class="h" style="top:1px"><span class="f" id="f21" style="transform:scaleX(1.0731)">Basic Information</span></div><div class="n" style="top:18px"><span class="f" id="f22" style="transform:scaleX(0.9724)">Type</span></div><div class="v" style="top:18px"><span class="f" id="f23" style="transform:scaleX(0.9911)">Partition</span></div><div class="n" style="top:35px"><span class="f" id="f24" style="transform:scaleX(0.9883)">Name</span></div><div class="v" style="top:35px"><span class="f" id="f25" style="transform:scaleX(0.9784)">StablePartition</span></div><div class="n" style="top:52px"><span class="f" id="f26" style="transform:scaleX(0.9091)">ID</span></div><div class="v" style="top:52px">1</div><div class="n" style="top:69px"><span class="f" id="f27" style="transform:scaleX(0.9743)">World ID(s)</span></div><div class="v" style="top:69px"></div><div class="bx" style="top:89px"></div><div class="h" style="top:86px"><span class="f" id="f28" style="transform:scaleX(1.1210)">State Information</span></div><div class="n" style="top:103px"><span class="f" id="f29" style="transform:scaleX(0.9849)">State</span></div><div class="v" style="top:103px"><span class="f" id="f30" style="transform:scaleX(1.0066)">Deactivity</span></div></div><div class="vsb"><svg class="a" style="left:4px;top:6px" width="9" height="6" viewBox="0 0 9 6"><path d="M.7 5.300L4.5 1.500l3.8 3.8" fill="none" stroke="#5a5a5a" stroke-width="2"/></svg><div class="th" style="top:18px;height:63px"></div><svg class="a" style="left:4px;top:107px" width="9" height="6" viewBox="0 0 9 6"><path d="M.7.7L4.5 4.5 8.3.7" fill="none" stroke="#606060" stroke-width="1.7"/></svg></div></div></div><div class="sunk" style="left:529px;top:178px;width:254px;height:235px"><div class="in"><div class="pg"><div class="bx" style="top:4px"></div><div class="h" style="top:1px"><span class="f" id="f52" style="transform:scaleX(1.0998)">ServiceManager Information</span></div><div class="n" style="top:18px"><span class="f" id="f31" style="transform:scaleX(0.9323)">Region</span></div><div class="v" style="top:18px"><span class="f" id="f32" style="transform:scaleX(0.8807)">KOR</span></div><div class="n" style="top:35px"><span class="f" id="f33" style="transform:scaleX(0.9743)">NetLauncher Port</span></div><div class="v" style="top:35px"><span class="f" id="f34" style="transform:scaleX(0.9802)">8500</span></div><div class="n" style="top:52px"><span class="f" id="f35" style="transform:scaleX(0.9679)">Service Port</span></div><div class="v" style="top:52px"><span class="f" id="f36" style="transform:scaleX(0.9802)">8501</span></div><div class="n" style="top:69px"><span class="f" id="f37" style="transform:scaleX(0.9715)">Service Patcher Port</span></div><div class="v" style="top:69px"><span class="f" id="f38" style="transform:scaleX(0.9802)">8510</span></div><div class="n" style="top:86px"><span class="f" id="f39" style="transform:scaleX(0.9110)">GSM Port</span></div><div class="v" style="top:86px"><span class="f" id="f40" style="transform:scaleX(0.9802)">8600</span></div><div class="n" style="top:103px"><span class="f" id="f41" style="transform:scaleX(0.9813)">Monitor Port</span></div><div class="v" style="top:103px"><span class="f" id="f42" style="transform:scaleX(0.9802)">8650</span></div><div class="n" style="top:120px"><span class="f" id="f43" style="transform:scaleX(0.8568)">GSM IP</span></div><div class="v" style="top:120px"><span class="f" id="f44" style="transform:scaleX(1.0245)">127.0.0.1</span></div><div class="n" style="top:137px"><span class="f" id="f45" style="transform:scaleX(0.9050)">GSM CodePage</span></div><div class="v" style="top:137px"><span class="f" id="f46" style="transform:scaleX(1.0135)">/Server/adminrequ...</span></div><div class="n" style="top:154px"><span class="f" id="f47" style="transform:scaleX(0.9099)">Patch Base URL</span></div><div class="v" style="top:154px"></div><div class="n" style="top:171px"><span class="f" id="f48" style="transform:scaleX(0.8984)">Patch URL</span></div><div class="v" style="top:171px"></div><div class="n" style="top:188px"><span class="f" id="f49" style="transform:scaleX(0.9348)">Patch Dir</span></div><div class="v" style="top:188px"></div><div class="n" style="top:205px"><span class="f" id="f50" style="transform:scaleX(0.9373)">Notice Filename</span></div><div class="v" style="top:205px"><span class="f" id="f51" style="transform:scaleX(0.9749)">ReserveNotice.xml</span></div><div class="bx p" style="top:225px"></div><div class="h" style="top:222px"><span class="f" id="f53" style="transform:scaleX(1.1047)">Default Server Information</span></div></div><div class="vsb"><svg class="a" style="left:4px;top:6px" width="9" height="6" viewBox="0 0 9 6"><path d="M.7 5.300L4.5 1.500l3.8 3.8" fill="none" stroke="#5a5a5a" stroke-width="2"/></svg><div class="th" style="top:18px;height:120px"></div><svg class="a" style="left:4px;top:220px" width="9" height="6" viewBox="0 0 9 6"><path d="M.7.7L4.5 4.5 8.3.7" fill="none" stroke="#606060" stroke-width="1.7"/></svg></div></div></div><div class="sunk" style="left:1px;top:418px;width:782px;height:133px"><div class="in" style="background:#000"><div class="a" style="left:0;top:0;width:761px;height:24px;background:#fff"></div><div class="a" style="left:199px;top:0;width:1px;height:24px;background:#e5e5e5"></div><div class="a" style="left:349px;top:0;width:1px;height:24px;background:#e5e5e5"></div><div class="lv" style="left:7px;top:1px;color:#000"><span class="f" id="f54" style="transform:scaleX(0.9465)">Date</span></div><div class="lv" style="left:206px;top:1px;color:#000"><span class="f" id="f55" style="transform:scaleX(0.9933)">Type</span></div><div class="lv" style="left:356px;top:1px;color:#000"><span class="f" id="f56" style="transform:scaleX(0.9676)">Log</span></div><div class="lv red" style="left:6px;top:24px"><span class="f" id="f57" style="transform:scaleX(0.9854)">2025-11-20 10:46:38</span></div><div class="lv red" style="left:206px;top:24px"><span class="f" id="f58" style="transform:scaleX(0.8581)">_ERROR</span></div><div class="lv red" style="left:356px;top:24px"><span class="f" id="f59" style="transform:scaleX(0.9668)">IP[127.0.0.1],PatchFolder AccessFailed [DNMasterServer64_TW.exe]</span></div><div class="lv red" style="left:6px;top:45px"><span class="f" id="f60" style="transform:scaleX(0.9854)">2025-11-20 10:46:38</span></div><div class="lv red" style="left:206px;top:45px"><span class="f" id="f61" style="transform:scaleX(0.8581)">_ERROR</span></div><div class="lv red" style="left:356px;top:45px"><span class="f" id="f62" style="transform:scaleX(0.9565)">IP[127.0.0.1],PatchFolder AccessFailed [DNCashServer64_TW.exe]</span></div><div class="lv red" style="left:6px;top:66px"><span class="f" id="f63" style="transform:scaleX(0.9854)">2025-11-20 10:46:38</span></div><div class="lv red" style="left:206px;top:66px"><span class="f" id="f64" style="transform:scaleX(0.8581)">_ERROR</span></div><div class="lv red" style="left:356px;top:66px"><span class="f" id="f65" style="transform:scaleX(0.9567)">IP[127.0.0.1],PatchFolder AccessFailed [DNVillageServerRX64_TW.e...</span></div><div class="lv red" style="left:6px;top:87px"><span class="f" id="f66" style="transform:scaleX(0.9854)">2025-11-20 10:46:38</span></div><div class="lv red" style="left:206px;top:87px"><span class="f" id="f67" style="transform:scaleX(0.8581)">_ERROR</span></div><div class="lv red" style="left:356px;top:87px"><span class="f" id="f68" style="transform:scaleX(0.9582)">IP[127.0.0.1],PatchFolder AccessFailed [DNGameServerX64_TW.exe]</span></div><div class="lv " style="color:#dcdcdc;left:6px;top:108px"><span class="f" id="f69" style="transform:scaleX(0.9854)">2025-11-20 10:48:01</span></div><div class="lv " style="color:#dcdcdc;left:206px;top:108px"><span class="f" id="f70" style="transform:scaleX(0.8529)">_FILELOG</span></div><div class="lv " style="color:#dcdcdc;left:356px;top:108px"><span class="f" id="f71" style="transform:scaleX(0.9715)">All Services Online</span></div><div class="vsb"><svg class="a" style="left:4px;top:7px" width="9" height="6" viewBox="0 0 9 6"><path d="M.7 5.300L4.5 1.500l3.8 3.8" fill="none" stroke="#606060" stroke-width="2"/></svg><div class="th" style="top:75px;height:37px"></div><svg class="a" style="left:4px;top:117px" width="9" height="6" viewBox="0 0 9 6"><path d="M.7.7L4.5 4.5 8.3.7" fill="none" stroke="#606060" stroke-width="1.7"/></svg></div></div></div><div class="a" style="left:2px;top:550px;width:680px;height:20px;box-sizing:border-box;background:#fff;border:1px solid #7a7a7a;border-color:#7a7a7a #c8c8c8 #c8c8c8 #7a7a7a"></div><div class="a" style="left:683px;top:551px;width:98px;height:18px;box-sizing:border-box;background:#e1e1e1;border:1px solid #adadad;text-align:center;font-weight:bold;font-size:12px;line-height:16px;letter-spacing:.6px">Command</div><div class="a" style="left:0;top:572px;width:784px;height:28px;background:#f0f0f0;border-top:1px solid #d7d7d7"></div><div class="a" style="left:3px;top:574px;font-size:12px;line-height:14px;font-family:'Liberation Sans','NanumGothic','Noto Sans CJK KR',sans-serif">준비</div><div class="a" style="left:693px;top:575px;font-size:12px;line-height:14px">NUM</div><div class="a" style="left:688px;top:574px;width:1px;height:10px;background:#d0d0d0"></div><div class="a" style="left:727px;top:574px;width:1px;height:10px;background:#d0d0d0"></div><div class="a" style="left:766px;top:574px;width:1px;height:10px;background:#d0d0d0"></div><div class="a" style="left:5px;top:50px;width:266px;height:204px;border:2px solid #ff1a1a;border-radius:4px;box-sizing:border-box"></div><div class="a" style="left:299.5px;top:80px;font-family:'Noto Sans CJK SC','Liberation Sans',sans-serif;font-weight:900;font-size:32px;line-height:44px;letter-spacing:0.5px;color:#ff1515;white-space:nowrap;text-shadow:2px 0 0 #fff,-2px 0 0 #fff,0 2px 0 #fff,0 -2px 0 #fff,1.500px 1.500px 0 #fff,-1.500px 1.500px 0 #fff,1.500px -1.500px 0 #fff,-1.500px -1.500px 0 #fff,2px 1px 0 #fff,-2px 1px 0 #fff,2px -1px 0 #fff,-2px -1px 0 #fff,1px 2px 0 #fff,-1px 2px 0 #fff,1px -2px 0 #fff,-1px -2px 0 #fff">绿色表是启动完成了</div></div>
<div id="tk"><svg class="a" style="left:16px;top:12px" width="16" height="16" viewBox="0 0 16 16"><path d="M0 2.200L6.5 1.300v6.200H0zM7.3 1.200L16 0v7.500H7.300zM0 8.300h6.500v6.200L0 13.600zM7.3 8.300H16V16l-8.7-1.200z" fill="#fff"/></svg><svg class="a" style="left:63px;top:9px" width="26" height="24" viewBox="0 0 26 24"><polygon points="8,0 24,4 24,15 8,11" fill="#3aa4ee" stroke="#d8e6f0" stroke-width="1"/><polygon points="13,13 18,14.5 18,17 13,15.5" fill="#c8d0d8"/><polygon points="4,17 17,20 13,23 0,19.5" fill="#eef1f4"/></svg><svg class="a" style="left:115px;top:10.500px" width="18" height="18" viewBox="0 0 20 20"><circle cx="10" cy="10" r="5.6" fill="none" stroke="#fff" stroke-width="2.6"/><g stroke="#fff" stroke-width="3.2"><path d="M10 0v4M10 16v4M0 10h4M16 10h4M2.9 2.900l2.9 2.900M14.2 14.200l2.9 2.900M2.9 17.100l2.9-2.900M14.2 5.800l2.9-2.9"/></g></svg><svg class="a" style="left:160px;top:6px" width="26" height="28" viewBox="0 0 26 28"><rect x="10" y="1" width="15" height="11" fill="#3fa650" stroke="#c9d2d9"/><rect x="2" y="9" width="16" height="12" fill="#5fa2e6" stroke="#c9d2d9"/><path d="M7 24h8l1 2H6z" fill="#c3cbd2"/><rect x="9" y="21" width="3" height="3" fill="#aab4bc"/><path d="M17 22c3 3 6 2 7-1" stroke="#c8302a" stroke-width="2.2" fill="none"/><path d="M6 1v5M3.5 4L6 7l2.5-3" stroke="#e08a2a" stroke-width="1.6" fill="none"/></svg><svg class="a" style="left:211px;top:12px" width="22" height="16" viewBox="0 0 22 16"><rect x=".5" y=".5" width="21" height="15" fill="#f1f1f1" stroke="#bdbdbd"/><rect x="5.5" y="3" width="9" height="10.5" fill="#1678d8"/><path d="M2 4h2.500M2 6.500h2.500M2 9h2.500M2 11.500h2.500M16 4h4M16 6.500h4M16 9h4M16 11.500h4" stroke="#a8a8a8"/></svg><svg class="a" style="left:260px;top:12px" width="22" height="16" viewBox="0 0 22 16"><rect x=".5" y=".5" width="21" height="15" fill="#f1f1f1" stroke="#bdbdbd"/><rect x="5.5" y="3" width="9" height="10.5" fill="#1678d8"/><path d="M2 4h2.500M2 6.500h2.500M2 9h2.500M2 11.500h2.500M16 4h4M16 6.500h4M16 9h4M16 11.500h4" stroke="#a8a8a8"/></svg><div class="a" style="left:296px;top:0;width:48px;height:39px;background:#4d6069"></div><svg class="a" style="left:308px;top:7.5px" width="24" height="24" viewBox="0 0 48 48">
<defs><linearGradient id="gd308_7" x1="0" y1="0" x2="1" y2="1"><stop offset="0" stop-color="#8a7630"/><stop offset=".5" stop-color="#6a5a22"/><stop offset="1" stop-color="#94803a"/></linearGradient></defs>
<path d="M13.4 46.600C22 46 31.5 43 38 38c4-3 6.5-6.5 7.5-10-3 5-9 9.5-16 12.2-6 2.1-12 3.6-16.1 6.400z" fill="#7c6a2a" stroke="#1a1405" stroke-width="1.4" stroke-linejoin="round"/>
<path fill-rule="evenodd" d="M25 1c1.5 3 2.6 6 2.6 9l8.4.4c6.5.6 10.5 5.1 10.2 11.2-.4 7.4-7.2 13.9-16.2 16.9-6 2-11 2.5-15.5 2l-.5-23.500L.7 15.800V15c6.3-1 12.3-2.5 16.1-5.100C20 7.5 23 4.5 25 1zM26.6 17.700c3.4-.7 6.8.3 6.8 3.8 0 4-2.9 7.5-6.8 9.900z" fill="url(#gd308_7)" stroke="#1a1405" stroke-width="1.6" stroke-linejoin="round"/>
<path d="M2.5 14.800c6-1 11.5-2.6 15-5 3-2.2 5.5-4.5 7.2-7M28.5 11.600l7.5.4c5.5.5 9 4.3 8.8 9.5-.3 6-5.5 11.5-13 14.5" fill="none" stroke="#d8c47a" stroke-width="1.1" stroke-linecap="round" opacity=".9"/>
<path d="M15.5 41.800c5-.2 10.5-1.6 15-3.600M17 44.200c7-1.3 15-4.2 21-9" fill="none" stroke="#c9b566" stroke-width=".9" opacity=".8"/>
</svg><div class="a" style="left:312.500px;top:22px;font-size:9.500px;font-weight:bold;color:#19f019;line-height:10px">SM</div><svg class="a" style="left:357px;top:10px" width="26" height="22" viewBox="0 0 26 22"><defs><radialGradient id="tb369" cx=".38" cy=".3" r=".85"><stop offset="0" stop-color="#f2f2f2"/><stop offset=".5" stop-color="#c9c9c9"/><stop offset="1" stop-color="#8e8e8e"/></radialGradient></defs><path d="M16 15l8 4.8-11-.3z" fill="#b4b4b4"/><ellipse cx="11.3" cy="10.1" rx="11" ry="10" fill="url(#tb369)"/><text x="12.6" y="17" font-size="16.5" font-weight="bold" fill="#fff" stroke="#a8a8a8" stroke-width=".4" paint-order="stroke" text-anchor="middle" font-family="'Liberation Sans',sans-serif">D</text></svg><svg class="a" style="left:406px;top:10px" width="26" height="22" viewBox="0 0 26 22"><defs><radialGradient id="tb418" cx=".38" cy=".3" r=".85"><stop offset="0" stop-color="#f2f2f2"/><stop offset=".5" stop-color="#c9c9c9"/><stop offset="1" stop-color="#8e8e8e"/></radialGradient></defs><path d="M16 15l8 4.8-11-.3z" fill="#b4b4b4"/><ellipse cx="11.3" cy="10.1" rx="11" ry="10" fill="url(#tb418)"/><text x="12.6" y="17" font-size="16.5" font-weight="bold" fill="#fff" stroke="#a8a8a8" stroke-width=".4" paint-order="stroke" text-anchor="middle" font-family="'Liberation Sans',sans-serif">L</text></svg><svg class="a" style="left:455px;top:10px" width="26" height="22" viewBox="0 0 26 22"><defs><radialGradient id="tb467" cx=".38" cy=".3" r=".85"><stop offset="0" stop-color="#f2f2f2"/><stop offset=".5" stop-color="#c9c9c9"/><stop offset="1" stop-color="#8e8e8e"/></radialGradient></defs><path d="M16 15l8 4.8-11-.3z" fill="#b4b4b4"/><ellipse cx="11.3" cy="10.1" rx="11" ry="10" fill="url(#tb467)"/><text x="12.6" y="17" font-size="16.5" font-weight="bold" fill="#fff" stroke="#a8a8a8" stroke-width=".4" paint-order="stroke" text-anchor="middle" font-family="'Liberation Sans',sans-serif">M</text></svg><svg class="a" style="left:504px;top:10px" width="26" height="22" viewBox="0 0 26 22"><defs><radialGradient id="tb516" cx=".38" cy=".3" r=".85"><stop offset="0" stop-color="#f2f2f2"/><stop offset=".5" stop-color="#c9c9c9"/><stop offset="1" stop-color="#8e8e8e"/></radialGradient></defs><path d="M16 15l8 4.8-11-.3z" fill="#b4b4b4"/><ellipse cx="11.3" cy="10.1" rx="11" ry="10" fill="url(#tb516)"/><text x="12.6" y="17" font-size="16.5" font-weight="bold" fill="#fff" stroke="#a8a8a8" stroke-width=".4" paint-order="stroke" text-anchor="middle" font-family="'Liberation Sans',sans-serif">V</text></svg><svg class="a" style="left:553px;top:10px" width="26" height="22" viewBox="0 0 26 22"><defs><radialGradient id="tb565" cx=".38" cy=".3" r=".85"><stop offset="0" stop-color="#f2f2f2"/><stop offset=".5" stop-color="#c9c9c9"/><stop offset="1" stop-color="#8e8e8e"/></radialGradient></defs><path d="M16 15l8 4.8-11-.3z" fill="#b4b4b4"/><ellipse cx="11.3" cy="10.1" rx="11" ry="10" fill="url(#tb565)"/><text x="12.6" y="17" font-size="16.5" font-weight="bold" fill="#fff" stroke="#a8a8a8" stroke-width=".4" paint-order="stroke" text-anchor="middle" font-family="'Liberation Sans',sans-serif">C</text></svg><svg class="a" style="left:602px;top:10px" width="26" height="22" viewBox="0 0 26 22"><defs><radialGradient id="tb614" cx=".38" cy=".3" r=".85"><stop offset="0" stop-color="#f2f2f2"/><stop offset=".5" stop-color="#c9c9c9"/><stop offset="1" stop-color="#8e8e8e"/></radialGradient></defs><path d="M16 15l8 4.8-11-.3z" fill="#b4b4b4"/><ellipse cx="11.3" cy="10.1" rx="11" ry="10" fill="url(#tb614)"/><text x="12.6" y="17" font-size="16.5" font-weight="bold" fill="#fff" stroke="#a8a8a8" stroke-width=".4" paint-order="stroke" text-anchor="middle" font-family="'Liberation Sans',sans-serif">G</text></svg><div class="bar" style="left:104px"></div><div class="bar" style="left:153px"></div><div class="bar" style="left:202px"></div><div class="bar" style="left:251px"></div><div class="bar" style="left:296px;width:48px"></div><div class="bar" style="left:349px;width:33px"></div><div class="bar" style="left:383px;width:6px;background:#5c93bf"></div><div class="bar" style="left:398px;width:33px"></div><div class="bar" style="left:432px;width:6px;background:#5c93bf"></div><div class="bar" style="left:447px;width:33px"></div><div class="bar" style="left:481px;width:6px;background:#5c93bf"></div><div class="bar" style="left:496px;width:33px"></div><div class="bar" style="left:530px;width:6px;background:#5c93bf"></div><div class="bar" style="left:545px;width:33px"></div><div class="bar" style="left:579px;width:6px;background:#5c93bf"></div><div class="bar" style="left:594px;width:33px"></div><div class="bar" style="left:628px;width:6px;background:#5c93bf"></div><div class="a" style="left:1px;top:1px;font-family:'Noto Serif CJK SC','Liberation Serif',serif;font-size:25px;line-height:40px;color:#e8141c;letter-spacing:5.5px;white-space:nowrap;font-weight:300;transform:skewX(-8deg)">游客之家</div><svg class="a" style="left:1066px;top:15px" width="13" height="8" viewBox="0 0 13 8"><path d="M.7 7L6.5 1.2 12.3 7" fill="none" stroke="#fff" stroke-width="1.4"/></svg><svg class="a" style="left:1088px;top:12px" width="17" height="17" viewBox="0 0 17 17"><g fill="none" stroke="#fff" stroke-width="1.2"><circle cx="8" cy="8" r="7.2"/><ellipse cx="8" cy="8" rx="3.3" ry="7.2"/><path d="M1 8h14M8 .8v14.400M2 4.300h12M2 11.700h8"/></g><circle cx="12.8" cy="12.8" r="3.8" fill="#1f2d40" stroke="#fff" stroke-width="1.1"/><path d="M10.3 15.300l5-5" stroke="#fff" stroke-width="1.1"/></svg><svg class="a" style="left:1111px;top:12px" width="18" height="16" viewBox="0 0 18 16"><path d="M1 5.500h3l4-3.800v12.600l-4-3.800H1z" fill="none" stroke="#fff" stroke-width="1.2"/><path d="M10.5 5.500c1.2 1.5 1.2 3.5 0 5M12.8 3.500c2.2 2.7 2.2 6.3 0 9M15 1.700c3 3.8 3 8.8 0 12.6" fill="none" stroke="#fff" stroke-width="1.1"/></svg><div class="a" style="left:1134px;top:9px;font-size:16px;line-height:20px;color:#fff;font-family:'Noto Sans CJK SC',sans-serif">中</div><div class="a" style="left:1150px;top:3px;width:80px;text-align:center;color:#fff;font-size:12px;line-height:16px"><span class="f" id="f72" style="transform:scaleX(1.0056);transform-origin:50% 50%">10:48</span></div><div class="a" style="left:1150px;top:22px;width:80px;text-align:center;color:#fff;font-size:12px;line-height:16px"><span class="f" id="f73" style="transform:scaleX(1.1053);transform-origin:50% 50%">2025/11/20</span></div><svg class="a" style="left:1238px;top:11px" width="26" height="26" viewBox="0 0 26 26"><path d="M.6.6h15.800v11.800H6.500L3.5 15.500v-3.100H.6z" fill="#fff"/><path d="M3 3.500h11M3 6h11M3 8.500h11" stroke="#1f2d40" stroke-width="1"/><circle cx="16.5" cy="16" r="7.5" fill="#2b2b2b" stroke="#555" stroke-width="1"/><text x="16.5" y="20" font-size="11" font-weight="bold" fill="#fff" text-anchor="middle" font-family="'Liberation Sans',sans-serif">3</text></svg><div class="a" style="left:1275px;top:0;width:1px;height:39px;background:#6d7783"></div></div>
</body></html>
